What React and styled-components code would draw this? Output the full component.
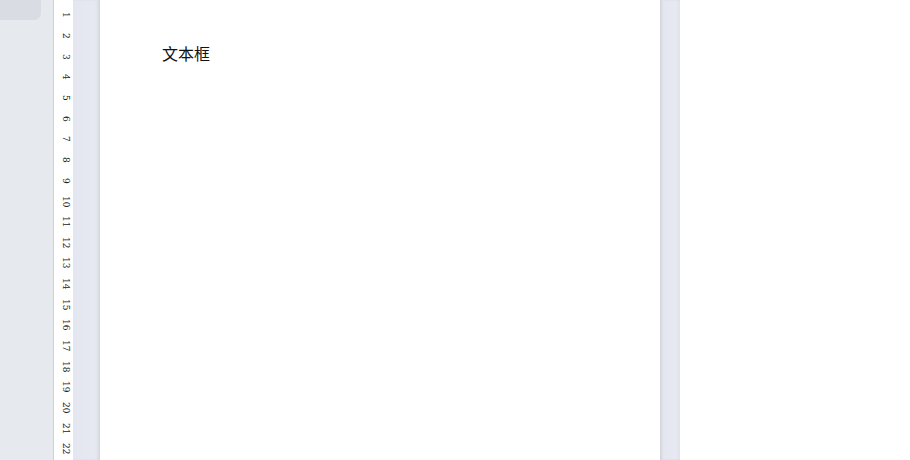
import React from 'react';
import styled, { createGlobalStyle } from 'styled-components';

const GlobalStyle = createGlobalStyle`
  html, body {
    margin: 0;
    padding: 0;
    background: #fff;
    overflow: hidden;
  }
`;

const Workspace = styled.div`
  display: flex;
  width: 910px;
  height: 460px;
  overflow: hidden;
  font-family: "Liberation Sans", "Noto Sans CJK SC", sans-serif;
`;

const SidePanel = styled.div`
  width: 54px;
  flex-shrink: 0;
  background: #e6e9ee;
  border-right: 1px solid #cdd1d8;
  box-sizing: border-box;
`;

const SideTab = styled.div`
  height: 28px;
  margin-top: -8px;
  width: 41px;
  background: #d9dde3;
  border-radius: 0 7px 7px 0;
`;

const Ruler = styled.div`
  width: 19px;
  flex-shrink: 0;
  background: #fff;
  display: flex;
  flex-direction: column;
  align-items: center;
  padding: 5px 0 0 5px;
  box-sizing: border-box;
`;

const Tick = styled.div`
  height: 20.67px;
  flex-shrink: 0;
  writing-mode: vertical-rl;
  font-family: "DejaVu Serif", serif;
  font-size: 9px;
  color: #222;
  display: flex;
  align-items: center;
  justify-content: center;
`;

const Gutter = styled.div`
  width: ${(p) => p.$w}px;
  flex-shrink: 0;
  background: linear-gradient(to right, #e4e7ef 0%, #e6e9f1 80%, #dfe2e8 100%);
  box-shadow: ${(p) => (p.$side === 'left' ? 'inset -2px 0 2px #d6d9e0' : 'inset 2px 0 2px #d3d6dd')};
`;

const Page = styled.div`
  width: 560px;
  flex-shrink: 0;
  background: #fff;
  padding: 43px 0 0 62px;
  box-sizing: border-box;
`;

const TextBox = styled.div`
  font-family: "Noto Sans CJK SC", sans-serif;
  font-size: 16px;
  line-height: 20px;
  color: #111;
`;

const Blank = styled.div`
  flex: 1;
  background: #fff;
`;

export default function App() {
  const ticks = Array.from({ length: 22 }, (_, i) => i + 1);
  return (
    <>
      <GlobalStyle />
      <Workspace>
        <SidePanel>
          <SideTab />
        </SidePanel>
        <Ruler>
          {ticks.map((n) => (
            <Tick key={n}>{n}</Tick>
          ))}
        </Ruler>
        <Gutter $w={27} $side="left" />
        <Page>
          <TextBox>文本框</TextBox>
        </Page>
        <Gutter $w={20} $side="right" />
        <Blank />
      </Workspace>
    </>
  );
}
